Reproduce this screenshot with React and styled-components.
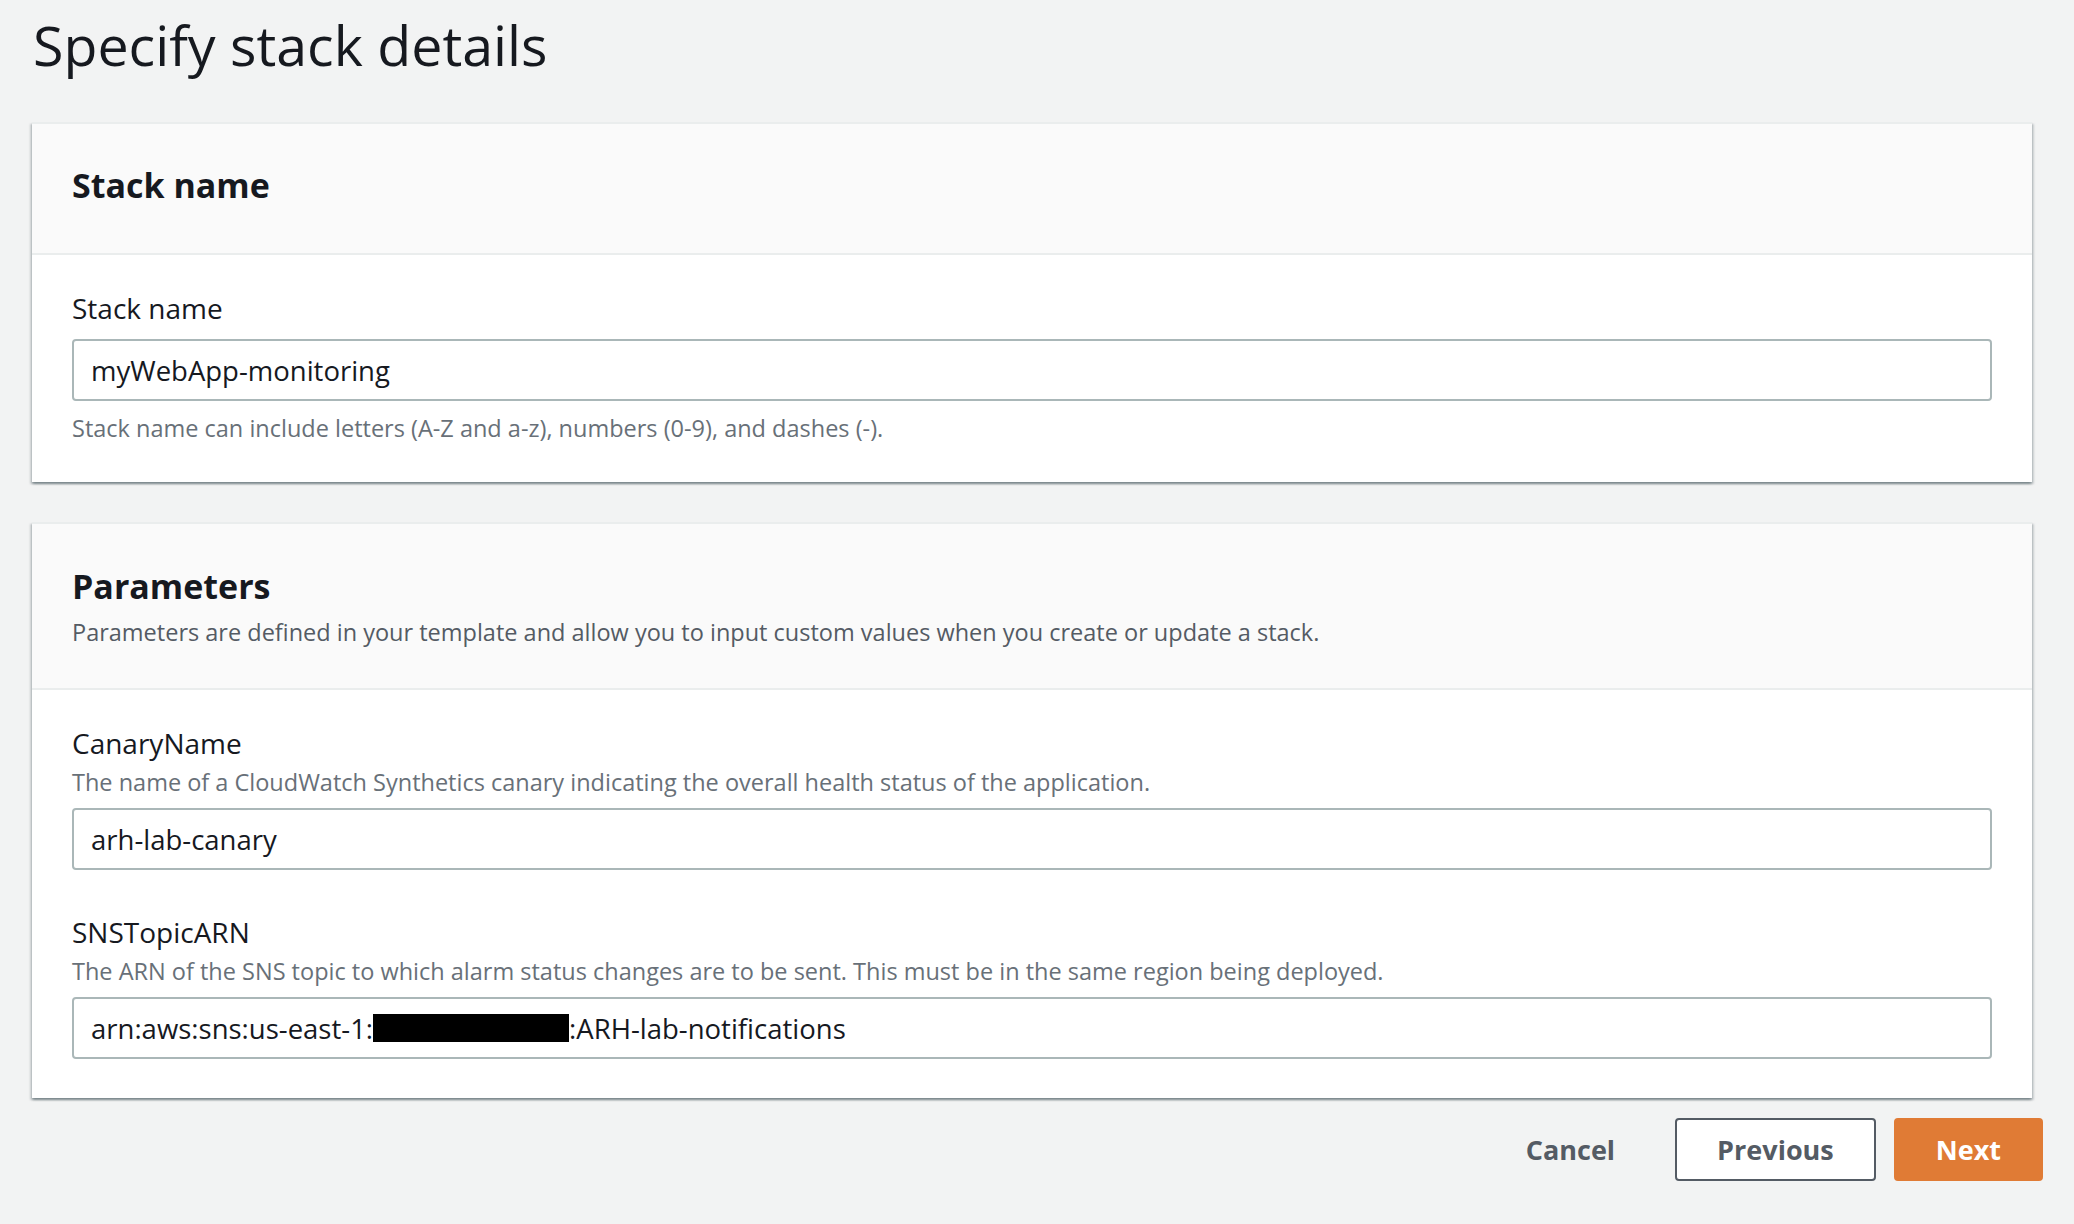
import React from 'react';
import styled, { createGlobalStyle } from 'styled-components';

const FONT = `"Open Sans", "Noto Sans", Arial, sans-serif`;

const GlobalStyle = createGlobalStyle`
  html, body {
    margin: 0;
    padding: 0;
    background: #f2f3f3;
  }
  body {
    font-family: ${FONT};
    color: #16191f;
  }
`;

const Page = styled.div`
  width: 2074px;
  min-height: 1224px;
  box-sizing: border-box;
  padding: 0 31px 0 32px;
  display: flex;
  flex-direction: column;
`;

const Title = styled.h1`
  margin: 0;
  padding: 10px 0 0 1px;
  height: 122px;
  box-sizing: border-box;
  font-size: 55.5px;
  font-weight: 400;
  line-height: 70px;
  color: #16191f;
`;

const Card = styled.section`
  margin-right: 11px;
  margin-bottom: 40px;
  background: #ffffff;
  border-top: 2px solid #eaeded;
  box-shadow: 0 2px 2px 0 rgba(0, 28, 36, 0.3), 2px 2px 2px 0 rgba(0, 28, 36, 0.15),
    -2px 2px 2px 0 rgba(0, 28, 36, 0.15);
`;

const CardHeader = styled.header`
  background: #fafafa;
  border-bottom: 2px solid #eaeded;
  padding: ${(p) => (p.$withDesc ? '38px 40px 39px' : '37px 40px 44px')};
`;

const CardTitle = styled.h2`
  margin: 0;
  font-size: 34px;
  font-weight: 700;
  line-height: 48px;
  color: #16191f;
`;

const CardDesc = styled.p`
  margin: 5px 0 0;
  font-size: 23.5px;
  line-height: 34px;
  color: #545b64;
`;

const CardBody = styled.div`
  padding: ${(p) => p.$pad || '34px 40px 38px'};
  display: flex;
  flex-direction: column;
  gap: ${(p) => p.$gap || '0px'};
`;

const Field = styled.div`
  display: flex;
  flex-direction: column;
`;

const Label = styled.label`
  font-size: 28px;
  line-height: 38px;
  color: #16191f;
`;

const Description = styled.div`
  font-size: 23.5px;
  line-height: 34px;
  color: #687078;
  margin: 3px 0 9px;
`;

const Constraint = styled.div`
  font-size: 23.5px;
  line-height: 34px;
  color: #687078;
  margin-top: 10px;
`;

const InputBox = styled.div`
  margin-top: ${(p) => p.$top || '0px'};
  height: 62px;
  box-sizing: border-box;
  border: 2px solid #aab7b8;
  border-radius: 4px;
  background: #ffffff;
  padding: 0 17px;
  display: flex;
  align-items: center;
  font-size: 27.5px;
  color: #16191f;
  white-space: pre;
`;

const Redacted = styled.span`
  display: inline-block;
  width: 196px;
  height: 28px;
  background: #000000;
`;

const Actions = styled.div`
  display: flex;
  justify-content: flex-end;
  align-items: center;
  gap: 18px;
  margin-top: -20px;
`;

const Button = styled.button`
  height: 63px;
  box-sizing: border-box;
  padding: 0 40px;
  border-radius: 4px;
  font-family: ${FONT};
  font-size: 27px;
  font-weight: 700;
  cursor: pointer;
  border: 2px solid ${(p) => (p.$variant === 'normal' ? '#545b64' : p.$variant === 'primary' ? '#e07b35' : 'transparent')};
  background: ${(p) => (p.$variant === 'primary' ? '#e07b35' : p.$variant === 'normal' ? '#ffffff' : 'transparent')};
  color: ${(p) => (p.$variant === 'primary' ? '#ffffff' : '#545b64')};
`;

export default function App() {
  return (
    <>
      <GlobalStyle />
      <Page>
        <Title>Specify stack details</Title>

        <Card>
          <CardHeader>
            <CardTitle>Stack name</CardTitle>
          </CardHeader>
          <CardBody $pad="34px 40px 37px">
            <Field>
              <Label>Stack name</Label>
              <InputBox $top="12px">myWebApp-monitoring</InputBox>
              <Constraint>Stack name can include letters (A-Z and a-z), numbers (0-9), and dashes (-).</Constraint>
            </Field>
          </CardBody>
        </Card>

        <Card>
          <CardHeader $withDesc>
            <CardTitle>Parameters</CardTitle>
            <CardDesc>
              Parameters are defined in your template and allow you to input custom values when you create or update a stack.
            </CardDesc>
          </CardHeader>
          <CardBody $gap="43px" $pad="34px 40px 39px">
            <Field>
              <Label>CanaryName</Label>
              <Description>
                The name of a CloudWatch Synthetics canary indicating the overall health status of the application.
              </Description>
              <InputBox>arh-lab-canary</InputBox>
            </Field>
            <Field>
              <Label>SNSTopicARN</Label>
              <Description>
                The ARN of the SNS topic to which alarm status changes are to be sent. This must be in the same region being deployed.
              </Description>
              <InputBox>
                arn:aws:sns:us-east-1:<Redacted />:ARH-lab-notifications
              </InputBox>
            </Field>
          </CardBody>
        </Card>

        <Actions>
          <Button $variant="link">Cancel</Button>
          <Button $variant="normal">Previous</Button>
          <Button $variant="primary">Next</Button>
        </Actions>
      </Page>
    </>
  );
}
